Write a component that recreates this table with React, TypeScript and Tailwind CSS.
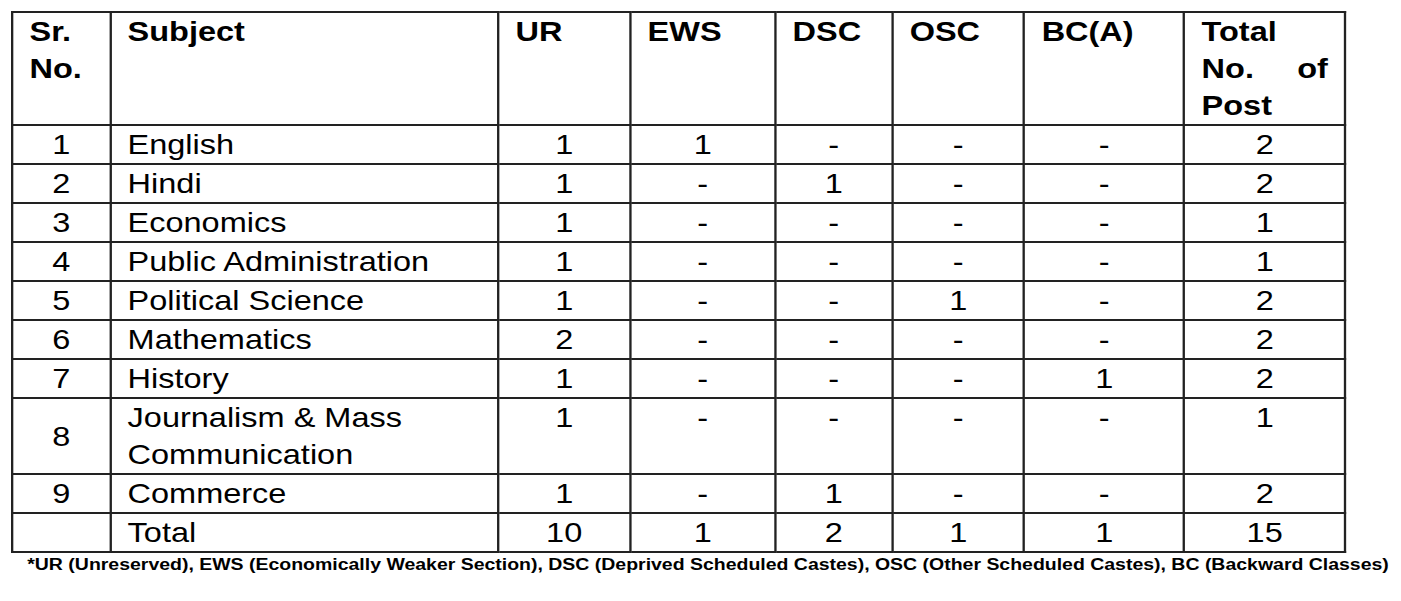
import React from "react";

type Row = { sr: string; subject: string; vals: string[]; tall?: boolean };

const rows: Row[] = [
  { sr: "1", subject: "English", vals: ["1", "1", "-", "-", "-", "2"] },
  { sr: "2", subject: "Hindi", vals: ["1", "-", "1", "-", "-", "2"] },
  { sr: "3", subject: "Economics", vals: ["1", "-", "-", "-", "-", "1"] },
  { sr: "4", subject: "Public Administration", vals: ["1", "-", "-", "-", "-", "1"] },
  { sr: "5", subject: "Political Science", vals: ["1", "-", "-", "1", "-", "2"] },
  { sr: "6", subject: "Mathematics", vals: ["2", "-", "-", "-", "-", "2"] },
  { sr: "7", subject: "History", vals: ["1", "-", "-", "-", "1", "2"] },
  { sr: "8", subject: "Journalism & Mass Communication", vals: ["1", "-", "-", "-", "-", "1"], tall: true },
  { sr: "9", subject: "Commerce", vals: ["1", "-", "1", "-", "-", "2"] },
  { sr: "", subject: "Total", vals: ["10", "1", "2", "1", "1", "15"] },
];

const widths = [84.5, 334.5, 113.8, 125, 100.9, 113.8, 137.9, 138.8];

export default function App() {
  const cell = "border-2 border-[#222] p-0 align-top";
  return (
    <div className="w-[1401px] h-[601px] bg-white overflow-hidden pl-[11px] pt-[11px] font-['Liberation_Sans',Arial,sans-serif] text-black">
      <div className="origin-top-left scale-x-[1.16] w-[1151px]">
        <table className="border-collapse table-fixed w-[1151px] text-[28px] leading-[37px]">
          <colgroup>
            {widths.map((w, i) => (
              <col key={i} style={{ width: w }} />
            ))}
          </colgroup>
          <thead>
            <tr className="h-[112px] font-bold">
              <th className={`${cell} text-left px-[14px] font-bold`}>Sr. No.</th>
              <th className={`${cell} text-left px-[14px] font-bold`}>Subject</th>
              <th className={`${cell} text-left px-[14px] font-bold`}>UR</th>
              <th className={`${cell} text-left px-[14px] font-bold`}>EWS</th>
              <th className={`${cell} text-left px-[14px] font-bold`}>DSC</th>
              <th className={`${cell} text-left px-[14px] font-bold`}>OSC</th>
              <th className={`${cell} text-left px-[14px] font-bold`}>BC(A)</th>
              <th className={`${cell} text-justify px-[14px] font-bold`}>Total No. of Post</th>
            </tr>
          </thead>
          <tbody>
            {rows.map((r, i) => (
              <tr key={i} className={r.tall ? "h-[76px]" : "h-[39px]"}>
                <td className="border-2 border-[#222] p-0 align-middle text-center">{r.sr}</td>
                <td className={`${cell} text-left px-[14px]`}>{r.subject}</td>
                {r.vals.map((v, j) => (
                  <td key={j} className={`${cell} text-center`}>
                    {v}
                  </td>
                ))}
              </tr>
            ))}
          </tbody>
        </table>
        <p className="pl-[14px] pt-[2px] text-[16.8px] leading-[20px] font-bold whitespace-nowrap">
          *UR (Unreserved), EWS (Economically Weaker Section), DSC (Deprived Scheduled Castes), OSC (Other Scheduled Castes), BC (Backward Classes)
        </p>
      </div>
    </div>
  );
}
